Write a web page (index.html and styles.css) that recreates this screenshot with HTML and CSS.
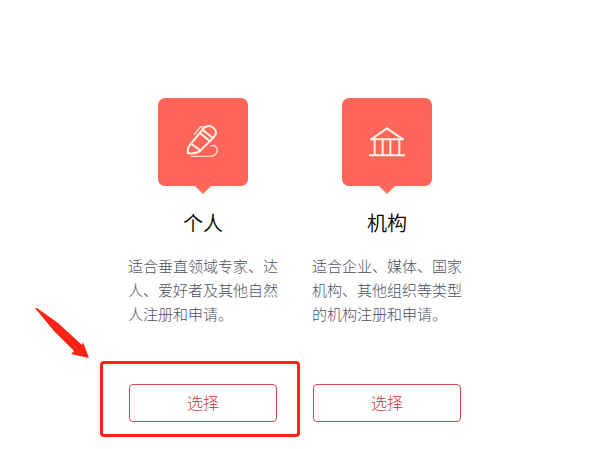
FILE: index.html
```html
<!DOCTYPE html>
<html lang="zh-CN">
<head>
    <meta charset="UTF-8">
    <meta name="viewport" content="width=device-width, initial-scale=1.0">
    <title>选择</title>
    <link rel="stylesheet" href="styles.css">
</head>
<body>
    <main class="account-types">
        <section class="type-card">
            <div class="type-icon">
                <svg viewBox="0 0 108 108" aria-hidden="true">
                    <path d="M9 88 C7 77 10 68 16 61 L54 15 C64 3 79 4 87 13 C95 21 94 31 86 40 L46 80 C37 88 25 89 9 88 Z"/>
                    <path d="M18 59 L46 79 M45 27 L74 51 M53 17 L83 42"/>
                    <path class="thin" d="M28 31 L46 9 L56 8 M78 66 C91 60 101 75 95 86 C91 94 84 97 74 97 H20"/>
                </svg>
            </div>
            <h2>个人</h2>
            <p>适合垂直领域专家、达人、爱好者及其他自然人注册和申请。</p>
            <div class="type-action">
                <button type="button">选择</button>
                <div class="highlight"></div>
                <svg class="arrow" viewBox="0 0 56 52" aria-hidden="true">
                    <path d="M1 1 L3 1 L24 16 L48 38 L49 35 L55 51 L37 47 L40 44 L20 24 Z"/>
                </svg>
            </div>
        </section>
        <section class="type-card">
            <div class="type-icon">
                <svg viewBox="0 0 108 108" aria-hidden="true">
                    <path d="M6 46 L54 13 L102 46 Z M17 46 V94 M41 46 V94 M64 46 V94 M91 46 V94 M1 94 H107"/>
                </svg>
            </div>
            <h2>机构</h2>
            <p>适合企业、媒体、国家机构、其他组织等类型的机构注册和申请。</p>
            <div class="type-action">
                <button type="button">选择</button>
            </div>
        </section>
    </main>
</body>
</html>
```

FILE: styles.css
```css
body {
    font-family: "Noto Sans CJK SC", sans-serif;
    font-weight: 300;
    margin: 0;
    background-color: #fff;
    color: #000;
}
.account-types {
    display: grid;
    grid-template-columns: repeat(2, minmax(150px, 1fr));
    gap: 34px;
    padding: 98px 153px 24px 128px;
}
.type-card {
    display: flex;
    flex-direction: column;
}
.type-icon {
    position: relative;
    display: flex;
    align-items: center;
    justify-content: center;
    align-self: center;
    width: 90px;
    height: 88px;
    border-radius: 7px;
    background-color: #ff6659;
}
.type-icon::after {
    content: "";
    position: absolute;
    top: 100%;
    left: 50%;
    margin-left: -8px;
    border: 8px solid transparent;
    border-top-color: #ff6659;
    border-bottom: 0;
}
.type-icon svg {
    width: 36px;
    height: 36px;
    fill: none;
    stroke: #fff1e6;
    stroke-width: 6;
    stroke-linejoin: round;
    stroke-linecap: round;
}
.type-icon .thin {
    stroke-width: 4;
    stroke: #ffdccb;
}
h2 {
    margin: 22px 0 16px;
    font-size: 20px;
    font-weight: 350;
    line-height: 30px;
    text-align: center;
}
p {
    margin: 0 0 58px;
    font-size: 15px;
    line-height: 24px;
    color: #4c515c;
}
.type-action {
    position: relative;
    margin: 0 1px;
}
button {
    display: block;
    width: 100%;
    height: 38px;
    padding: 0 0 2px;
    border: 1px solid #cf4a56;
    border-radius: 4px;
    background-color: #fff;
    color: #cc3540;
    font: inherit;
    font-size: 16px;
    cursor: pointer;
}
.highlight {
    position: absolute;
    inset: -23px -23px -15px -29px;
    border: 3px solid #fb2216;
    border-radius: 4px;
    pointer-events: none;
}
.arrow {
    position: absolute;
    top: -77px;
    left: -95px;
    width: 56px;
    height: 52px;
    fill: #fb2216;
}
```
